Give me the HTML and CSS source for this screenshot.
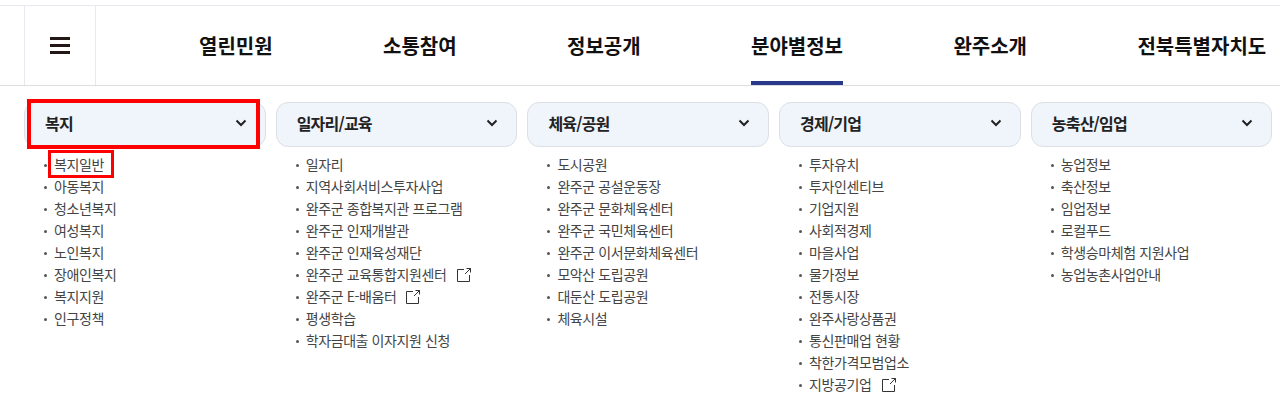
FILE: index.html
```html
<!DOCTYPE html>
<html lang="ko">
<head>
    <meta charset="UTF-8">
    <meta name="viewport" content="width=device-width, initial-scale=1.0">
    <title>분야별정보</title>
    <link rel="stylesheet" href="styles.css">
</head>
<body>
    <div class="header">
        <button class="menu-btn" aria-label="전체메뉴">
            <span></span><span></span><span></span>
        </button>
        <ul class="gnb">
            <li>열린민원</li>
            <li>소통참여</li>
            <li>정보공개</li>
            <li class="active">분야별정보</li>
            <li>완주소개</li>
            <li>전북특별자치도</li>
        </ul>
    </div>

    <div class="sub-grid">
        <div class="sub-col">
            <div class="sub-title">복지
                <svg class="chev" width="12" height="8" viewBox="0 0 12 8"><path d="M1.5 1.5 6 6l4.5-4.5" fill="none" stroke="#222" stroke-width="2"/></svg>
            </div>
            <ul class="sub-list">
                <li>복지일반</li>
                <li>아동복지</li>
                <li>청소년복지</li>
                <li>여성복지</li>
                <li>노인복지</li>
                <li>장애인복지</li>
                <li>복지지원</li>
                <li>인구정책</li>
            </ul>
            <div class="mark mark-title"></div>
            <div class="mark mark-item"></div>
        </div>
        <div class="sub-col">
            <div class="sub-title">일자리/교육
                <svg class="chev" width="12" height="8" viewBox="0 0 12 8"><path d="M1.5 1.5 6 6l4.5-4.5" fill="none" stroke="#222" stroke-width="2"/></svg>
            </div>
            <ul class="sub-list">
                <li>일자리</li>
                <li>지역사회서비스투자사업</li>
                <li>완주군 종합복지관 프로그램</li>
                <li>완주군 인재개발관</li>
                <li>완주군 인재육성재단</li>
                <li>완주군 교육통합지원센터
                    <svg class="ext" width="14" height="14" viewBox="0 0 14 14"><path d="M7 1.5H.5v12h12V7M9.5.5h4v4M13.5.5 8 6" fill="none" stroke="#333"/></svg>
                </li>
                <li>완주군 E-배움터
                    <svg class="ext" width="14" height="14" viewBox="0 0 14 14"><path d="M7 1.5H.5v12h12V7M9.5.5h4v4M13.5.5 8 6" fill="none" stroke="#333"/></svg>
                </li>
                <li>평생학습</li>
                <li>학자금대출 이자지원 신청</li>
            </ul>
        </div>
        <div class="sub-col">
            <div class="sub-title">체육/공원
                <svg class="chev" width="12" height="8" viewBox="0 0 12 8"><path d="M1.5 1.5 6 6l4.5-4.5" fill="none" stroke="#222" stroke-width="2"/></svg>
            </div>
            <ul class="sub-list">
                <li>도시공원</li>
                <li>완주군 공설운동장</li>
                <li>완주군 문화체육센터</li>
                <li>완주군 국민체육센터</li>
                <li>완주군 이서문화체육센터</li>
                <li>모악산 도립공원</li>
                <li>대둔산 도립공원</li>
                <li>체육시설</li>
            </ul>
        </div>
        <div class="sub-col">
            <div class="sub-title">경제/기업
                <svg class="chev" width="12" height="8" viewBox="0 0 12 8"><path d="M1.5 1.5 6 6l4.5-4.5" fill="none" stroke="#222" stroke-width="2"/></svg>
            </div>
            <ul class="sub-list">
                <li>투자유치</li>
                <li>투자인센티브</li>
                <li>기업지원</li>
                <li>사회적경제</li>
                <li>마을사업</li>
                <li>물가정보</li>
                <li>전통시장</li>
                <li>완주사랑상품권</li>
                <li>통신판매업 현황</li>
                <li>착한가격모범업소</li>
                <li>지방공기업
                    <svg class="ext" width="14" height="14" viewBox="0 0 14 14"><path d="M7 1.5H.5v12h12V7M9.5.5h4v4M13.5.5 8 6" fill="none" stroke="#333"/></svg>
                </li>
            </ul>
        </div>
        <div class="sub-col">
            <div class="sub-title">농축산/임업
                <svg class="chev" width="12" height="8" viewBox="0 0 12 8"><path d="M1.5 1.5 6 6l4.5-4.5" fill="none" stroke="#222" stroke-width="2"/></svg>
            </div>
            <ul class="sub-list">
                <li>농업정보</li>
                <li>축산정보</li>
                <li>임업정보</li>
                <li>로컬푸드</li>
                <li>학생승마체험 지원사업</li>
                <li>농업농촌사업안내</li>
            </ul>
        </div>
    </div>
</body>
</html>
```

FILE: styles.css
```css
* {
    margin: 0;
    padding: 0;
    box-sizing: border-box;
}

body {
    font-family: "Noto Sans CJK KR", "Noto Sans", sans-serif;
    background: white;
    color: #222;
    height: 401px;
    overflow: hidden;
    padding-top: 5px;
}

ul {
    list-style: none;
}

.header {
    display: flex;
    height: 81px;
    padding-left: 24px;
    border-top: 1px solid #e8e9ef;
    border-bottom: 1px solid #dddddd;
}

.menu-btn {
    width: 72px;
    display: flex;
    flex-direction: column;
    align-items: center;
    justify-content: center;
    gap: 4px;
    background: white;
    border: none;
    border-left: 1px solid #e8e9ef;
    border-right: 1px solid #e8e9ef;
}

.menu-btn span {
    display: block;
    width: 20px;
    height: 3px;
    background: #231815;
}

.gnb {
    display: flex;
    gap: 110.4px;
    margin-left: 103px;
}

.gnb li {
    font-size: 20px;
    font-weight: 700;
    line-height: 79px;
    color: #111;
    white-space: nowrap;
}

.gnb li.active {
    border-bottom: 4px solid #28398c;
}

.sub-grid {
    display: grid;
    grid-template-columns: repeat(5, 1fr);
    gap: 10px;
    width: 1248.5px;
    margin: 16px 0 0 24px;
}

.sub-col {
    position: relative;
}

.sub-title {
    display: flex;
    justify-content: space-between;
    align-items: center;
    height: 45px;
    padding: 0 18px 3px 20px;
    font-size: 16px;
    font-weight: 700;
    letter-spacing: -0.8px;
    color: #222;
    background: #f0f4fb;
    border: 1px solid #dcdfe4;
    border-radius: 12px;
}

.sub-list {
    margin-top: 6px;
    padding-left: 20px;
}

.sub-list li {
    display: flex;
    align-items: center;
    height: 22px;
    font-size: 14px;
    letter-spacing: -0.4px;
    color: #444;
}

.sub-list li::before {
    content: "";
    width: 3px;
    height: 3px;
    margin: 2px 7px 0 0;
    border-radius: 50%;
    background: #555;
    flex: none;
}

.ext {
    margin: 1px 0 0 10px;
}

/* red annotation boxes over the menu */
.mark {
    position: absolute;
    border: 4px solid #ff0000;
}

.mark-title {
    left: 3px;
    top: -3px;
    width: 233px;
    height: 50px;
}

.mark-item {
    left: 24px;
    top: 48px;
    width: 66px;
    height: 28px;
    border-width: 3px;
}
```
